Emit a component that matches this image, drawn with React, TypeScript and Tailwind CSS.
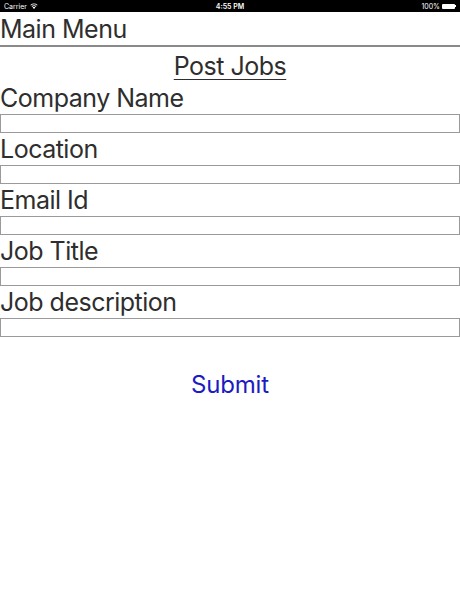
const fields = ['Company Name', 'Location', 'Email Id', 'Job Title', 'Job description'];

function StatusBar() {
  return (
    <div className="flex h-[12px] items-center justify-between bg-black px-[4px] text-[7px] leading-none text-white">
      <div className="flex w-[60px] items-center gap-[3px]">
        <span>Carrier</span>
        <svg width="8" height="6" viewBox="0 0 8 6" fill="white">
          <path d="M4 6 L2.6 4.4 A2 2 0 0 1 5.4 4.4 Z" />
          <path d="M1.6 3.3 A3.5 3.5 0 0 1 6.4 3.3 L5.8 3.9 A2.7 2.7 0 0 0 2.2 3.9 Z" />
          <path d="M0.4 2 A5.2 5.2 0 0 1 7.6 2 L7 2.6 A4.4 4.4 0 0 0 1 2.6 Z" />
        </svg>
      </div>
      <span className="font-semibold">4:55 PM</span>
      <div className="flex w-[60px] items-center justify-end gap-[2px]">
        <span>100%</span>
        <div className="flex items-center">
          <div className="h-[5px] w-[13px] rounded-[1px] bg-white" />
          <div className="h-[2px] w-[1px] bg-white" />
        </div>
      </div>
    </div>
  );
}

export default function App() {
  return (
    <div className="min-h-[614px] bg-white text-[#2e2e2e]" style={{ fontFamily: 'Inter, "Noto Sans", sans-serif' }}>
      <StatusBar />
      <div className="h-[35px] border-b-2 border-[#8a8a8a] text-[25px] leading-[34px] tracking-[-0.5px]">Main Menu</div>
      <div className="mt-[3px] text-center text-[25px] leading-[32px] tracking-[-0.5px]">
        <span className="underline decoration-1 underline-offset-[4px]">Post Jobs</span>
      </div>
      {fields.map((f) => (
        <div key={f}>
          <div className="text-[25px] leading-[32px] tracking-[-0.5px]">{f}</div>
          <input className="block h-[19px] w-full border border-[#9a9a9a] outline-none" />
        </div>
      ))}
      <div className="mt-[32px] text-center">
        <button className="text-[24px] leading-[32px] tracking-[-0.2px] text-[#1c1cc0]">Submit</button>
      </div>
    </div>
  );
}
